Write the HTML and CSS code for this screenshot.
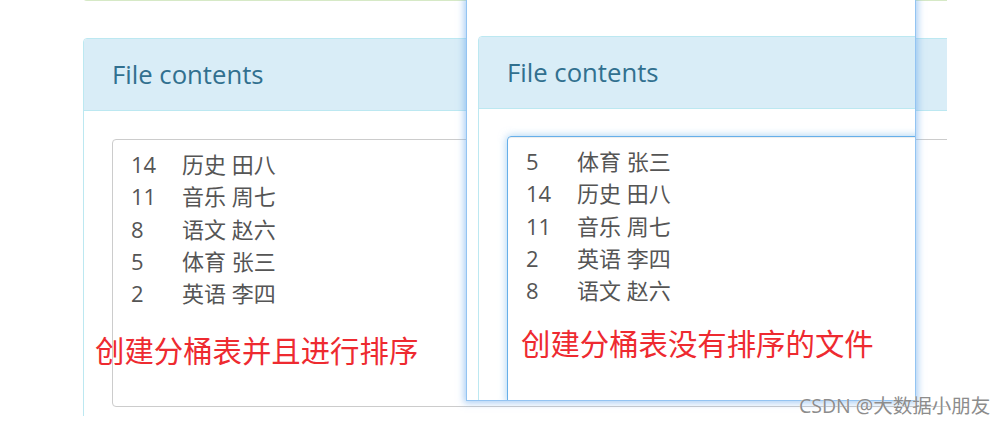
FILE: index.html
```html
<!DOCTYPE html>
<html lang="zh-CN">
<head>
    <meta charset="UTF-8">
    <meta name="viewport" content="width=device-width, initial-scale=1.0">
    <title>File contents</title>
    <link rel="stylesheet" href="styles.css">
</head>
<body>
    <div class="shot">
        <!-- page behind the snip -->
        <div class="page">
            <div class="prev-panel"></div>
            <div class="panel">
                <div class="panel-heading">File contents</div>
                <div class="panel-body">
                    <div class="textarea">
                        <div class="row"><span class="num">14</span><span>历史 田八</span></div>
                        <div class="row"><span class="num">11</span><span>音乐 周七</span></div>
                        <div class="row"><span class="num">8</span><span>语文 赵六</span></div>
                        <div class="row"><span class="num">5</span><span>体育 张三</span></div>
                        <div class="row"><span class="num">2</span><span>英语 李四</span></div>
                    </div>
                </div>
            </div>
        </div>
        <div class="note note-left">创建分桶表并且进行排序</div>

        <!-- snipped window laid on top -->
        <div class="snip">
            <div class="page page-snip">
                <div class="prev-panel"></div>
                <div class="panel">
                    <div class="panel-heading">File contents</div>
                    <div class="panel-body">
                        <div class="textarea focus">
                            <div class="row"><span class="num">5</span><span>体育 张三</span></div>
                            <div class="row"><span class="num">14</span><span>历史 田八</span></div>
                            <div class="row"><span class="num">11</span><span>音乐 周七</span></div>
                            <div class="row"><span class="num">2</span><span>英语 李四</span></div>
                            <div class="row"><span class="num">8</span><span>语文 赵六</span></div>
                        </div>
                    </div>
                </div>
            </div>
            <div class="note note-right">创建分桶表没有排序的文件</div>
        </div>
    </div>
    <div class="watermark">CSDN @大数据小朋友</div>
</body>
</html>
```

FILE: styles.css
```css
body {
    margin: 0;
    background-color: #fff;
    font-family: "Open Sans", "Noto Sans CJK SC", sans-serif;
}
.shot {
    width: 947px;
    height: 416px;
    overflow: hidden;
    position: relative;
}
.page {
    width: 1100px;
    padding-left: 83px;
    box-sizing: border-box;
}
.prev-panel {
    height: 4px;
    margin-top: -4px;
    border: 1px solid #d6e9c6;
    border-top: none;
    border-radius: 0 0 4px 4px;
}
.panel {
    margin-top: 37px;
    border: 1px solid #bce8f1;
    border-radius: 4px;
    background-color: #fff;
}
.panel-heading {
    height: 71px;
    display: flex;
    align-items: center;
    padding: 0 28px;
    background-color: #d9edf7;
    border-bottom: 1px solid #bce8f1;
    border-radius: 3px 3px 0 0;
    color: #31708f;
    font-size: 25.7px;
}
.panel-body {
    padding: 28px 28px 40px;
}
.textarea {
    width: 900px;
    height: 268px;
    box-sizing: border-box;
    padding: 8px 18px;
    border: 1px solid #ccc;
    border-radius: 4px;
    color: #555;
    font-size: 22px;
    line-height: 32.3px;
}
.textarea.focus {
    border-color: #66afe9;
    box-shadow: inset 0 1px 1px rgba(0, 0, 0, 0.075), 0 0 8px rgba(102, 175, 233, 0.6);
}
.row {
    display: flex;
}
.num {
    width: 51px;
}

/* the snip window */
.snip {
    position: absolute;
    left: 466px;
    top: -2px;
    width: 450px;
    height: 403px;
    box-sizing: border-box;
    border: 1px solid #93c4f2;
    box-shadow: 0 0 7px 2px rgba(100, 165, 235, 0.55);
    background-color: #fff;
    overflow: hidden;
}
.page-snip {
    padding-left: 11px;
}
.page-snip .panel {
    margin-top: 36px;
}
.page-snip .panel-body {
    padding-top: 27px;
}

/* red annotations */
.note {
    position: absolute;
    color: #ee2a30;
    font-size: 29.4px;
    line-height: 30px;
    white-space: nowrap;
}
.note-left {
    left: 95px;
    top: 336px;
}
.note-right {
    left: 54px;
    top: 330px;
}
.watermark {
    position: absolute;
    left: 799px;
    top: 395px;
    color: #8c8c8c;
    font-size: 19.5px;
    line-height: 22px;
    white-space: nowrap;
    text-shadow: 0 0 1px #fff;
}
```
